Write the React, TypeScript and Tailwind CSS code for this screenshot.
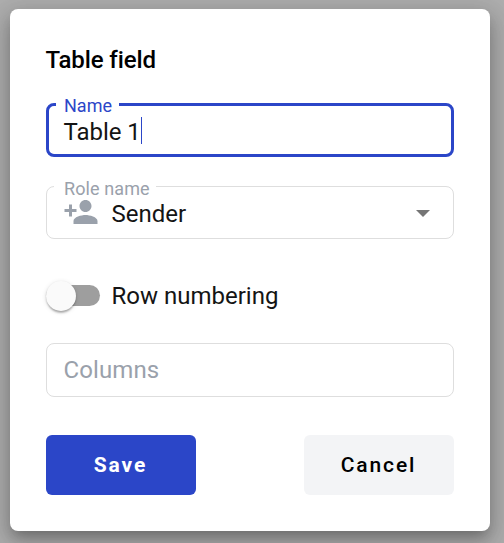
import React from "react";

function FloatingLabel({ className, children }: { className: string; children: React.ReactNode }) {
  return (
    <span className={`absolute bg-white text-[18px] leading-[20px] whitespace-nowrap ${className}`}>
      {children}
    </span>
  );
}

export default function App() {
  return (
    <div className="h-[543px] w-[504px] overflow-hidden bg-[#adadad] pt-[9px] pr-[14px] pl-[10px] font-['Roboto',sans-serif] text-[24px] text-[#141414]">
      <div className="flex h-[522px] flex-col rounded-[8px] bg-white px-9 pt-9 shadow-[0_8px_12px_-4px_rgba(0,0,0,0.2),0_12px_26px_2px_rgba(0,0,0,0.14),0_5px_21px_4px_rgba(0,0,0,0.12)]">
        <h2 className="-ml-[0.5px] h-[30px] text-[24px] leading-[30px] font-medium tracking-[-0.1px] text-black">Table field</h2>

        <div className="relative mt-7 flex h-[54px] items-center rounded-[8px] border-[3px] border-[#2b46c8] pl-[15px]">
          <FloatingLabel className="-top-[10px] left-[7px] pr-[7px] pl-2 text-[#2b46c8]">Name</FloatingLabel>
          <span className="-ml-[0.5px] pt-[3px] leading-[28px] tracking-[-0.05px]">Table 1</span>
          <span className="h-[27px] w-px bg-[#2b46c8]" />
        </div>

        <div className="relative mt-[29px] flex h-[53px] items-center rounded-[8px] border border-[#dedede] pl-4">
          <FloatingLabel className="-top-[8px] left-[7px] pr-[6px] pl-[10px] tracking-[0.1px] text-[#9aa1ab]">Role name</FloatingLabel>
          <svg className="-mt-[2px] size-9" viewBox="0 0 24 24" fill="#9aa1ab">
            <path d="M15 12c2.21 0 4-1.79 4-4s-1.79-4-4-4-4 1.79-4 4 1.79 4 4 4zm-9-2V7H4v3H1v2h3v3h2v-3h3v-2H6zm9 4c-2.67 0-8 1.34-8 4v2h16v-2c0-2.66-5.33-4-8-4z" />
          </svg>
          <span className="ml-[12.5px] pt-[2px] leading-[28px]">Sender</span>
          <svg className="mt-px mr-[23px] ml-auto h-[7px] w-[14px]" viewBox="0 0 14 7" fill="#757575">
            <path d="M0 0h14L7 7z" />
          </svg>
        </div>

        <div className="mt-[42px] flex h-[30px] items-center">
          <div className="-mt-px flex h-[21px] w-[54px] items-center rounded-full bg-[#9e9e9e]">
            <div className="size-[30px] shrink-0 rounded-full bg-[#fafafa] shadow-[0_3px_2px_-1px_rgba(0,0,0,0.2),0_1px_2px_rgba(0,0,0,0.14),0_1px_5px_rgba(0,0,0,0.12)]" />
          </div>
          <span className="ml-[11.5px] leading-[28px]">Row numbering</span>
        </div>

        <div className="mt-8 flex h-[54px] items-center rounded-[8px] border border-[#dedede] pl-[16.5px] tracking-[0.1px] text-[#9aa1ab]">
          Columns
        </div>

        <div className="mt-[38px] flex justify-between text-[21px] tracking-[1.9px]">
          <button className="h-[60px] w-[150px] rounded-[6px] bg-[#2b46c8] pt-[2px] pr-px font-bold text-white">Save</button>
          <button className="h-[60px] w-[150px] rounded-[6px] bg-[#f3f4f6] pt-[2px] pr-px font-medium text-black">Cancel</button>
        </div>
      </div>
    </div>
  );
}
